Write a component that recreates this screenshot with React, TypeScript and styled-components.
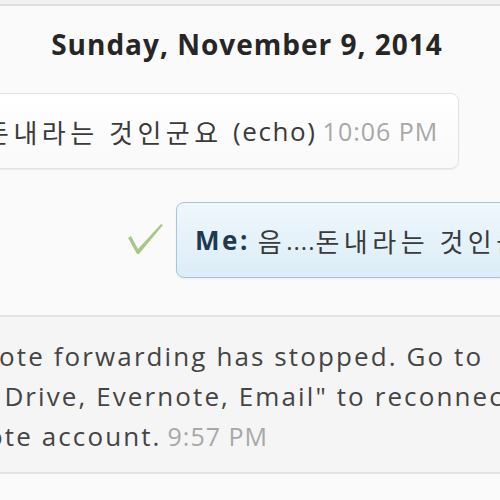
import React from "react";
import styled, { createGlobalStyle } from "styled-components";

const Global = createGlobalStyle`
  html, body { margin: 0; padding: 0; background: #fafafa; }
  body { font-family: "Open Sans", "Noto Sans CJK KR", sans-serif; }
`;

const Page = styled.div`
  width: 500px;
  height: 500px;
  overflow: hidden;
  background: #fafafa;
  display: flex;
  flex-direction: column;
`;

const TopStrip = styled.div`
  height: 4px;
  background: #f1f1f1;
  border-bottom: 2px solid #e0e0e0;
  flex-shrink: 0;
`;

const DateHeader = styled.div`
  height: 76px;
  display: flex;
  align-items: center;
  justify-content: center;
  padding-right: 6px;
  font-size: 28px;
  letter-spacing: 1px;
  font-weight: 700;
  color: #262626;
  flex-shrink: 0;
`;

const Row = styled.div<{ $out?: boolean; $gap: number }>`
  display: flex;
  align-items: center;
  margin-top: ${(p) => p.$gap}px;
  padding-left: ${(p) => (p.$out ? 128 : 0)}px;
  gap: 12px;
  flex-shrink: 0;
`;

const Bubble = styled.div<{ $out?: boolean; $shift?: number }>`
  height: 76px;
  box-sizing: border-box;
  display: flex;
  align-items: center;
  white-space: nowrap;
  flex-shrink: 0;
  margin-left: ${(p) => p.$shift ?? 0}px;
  padding: 0 20px 0 ${(p) => (p.$out ? 18 : 0)}px;
  border-radius: 8px;
  font-size: 26px;
  letter-spacing: 1.6px;
  color: #3a3a3a;
  border: 1px solid ${(p) => (p.$out ? "#a9c5d6" : "#e2e2e2")};
  background: ${(p) =>
    p.$out
      ? "linear-gradient(#eef7fc, #dcedf7)"
      : "linear-gradient(#ffffff, #f9f9f9)"};
  box-shadow: 0 1px 2px rgba(0, 0, 0, 0.06);
`;

const Hangul = styled.span`
  font-family: "Noto Sans CJK KR", sans-serif;
  letter-spacing: 4.5px;
  white-space: pre;
`;

const Dots = styled.span`
  letter-spacing: 1px;
  font-size: 24px;
`;

const Sender = styled.span`
  font-weight: 700;
  color: #1d3a52;
  letter-spacing: 2.5px;
  margin-right: 8px;
`;

const Time = styled.span`
  color: #a8a8a8;
  font-size: 25px;
  letter-spacing: 1px;
  margin-left: 6px;
`;

const Check = styled.svg`
  width: 36px;
  height: 34px;
  flex-shrink: 0;
`;

const Divider = styled.div<{ $gap: number }>`
  margin-top: ${(p) => p.$gap}px;
  height: 2px;
  background: #e4e4e4;
  flex-shrink: 0;
`;

const SystemBlock = styled.div`
  background: #f5f5f5;
  border-bottom: 2px solid #e2e2e2;
  padding: 19px 0 16px;
  flex-shrink: 0;
  font-size: 26px;
  letter-spacing: 2.1px;
  color: #444;
  line-height: 40px;
`;

const Line = styled.div<{ $shift: number }>`
  white-space: nowrap;
  margin-left: ${(p) => p.$shift}px;
`;

export default function App() {
  return (
    <>
      <Global />
      <Page>
        <TopStrip />
        <DateHeader>Sunday, November 9, 2014</DateHeader>
        <Row $gap={11}>
          <Bubble $shift={-16}>
            <Hangul>돈내라는 것인군요 </Hangul>(echo)<Time>10:06 PM</Time>
          </Bubble>
        </Row>
        <Row $out $gap={33}>
          <Check viewBox="0 0 36 34">
            <path
              d="M0 15 L3 13 L10 26 L33 1 L35 2 L11 31 L9 31 Z"
              fill="#a6c98b"
            />
          </Check>
          <Bubble $out>
            <Sender>Me:</Sender>
            <Hangul>음</Hangul>
            <Dots>....</Dots>
            <Hangul>돈내라는 것인군요</Hangul>
          </Bubble>
        </Row>
        <Divider $gap={37} />
        <SystemBlock>
          <Line $shift={-80}>Evernote forwarding has stopped. Go to</Line>
          <Line $shift={-115}>"Google Drive, Evernote, Email" to reconnect your</Line>
          <Line $shift={-92}>
            Evernote account.<Time>9:57 PM</Time>
          </Line>
        </SystemBlock>
      </Page>
    </>
  );
}
